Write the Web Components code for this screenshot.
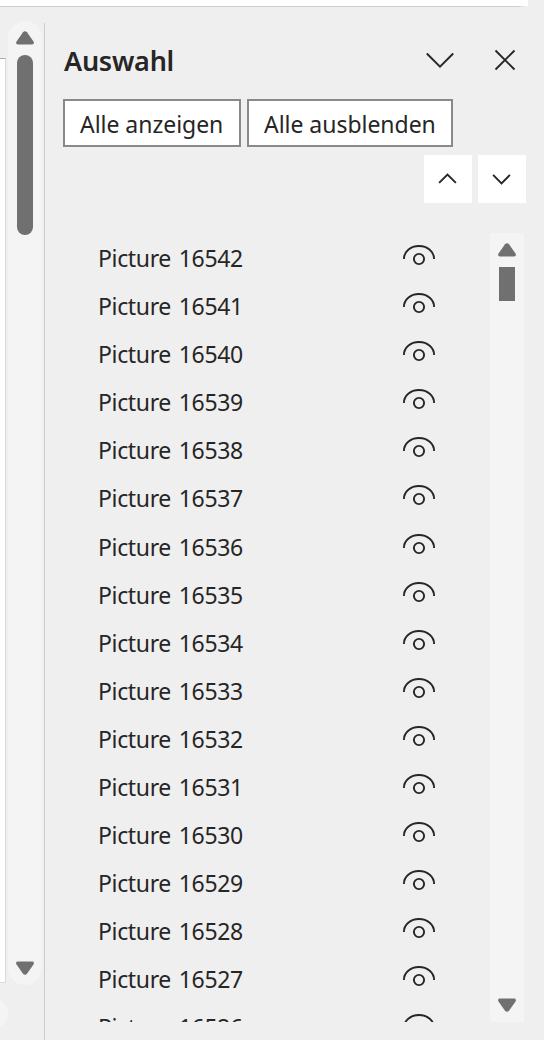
<!DOCTYPE html>
<html lang="de"><head><meta charset="utf-8"><title>Auswahl</title>
<style>html,body{margin:0;height:100%;overflow:hidden;background:#efefef}</style></head>
<body><selection-app></selection-app>
<script>
const define = (name, html, setup) => customElements.define(name, class extends HTMLElement {
  constructor() {
    super();
    this.attachShadow({mode: 'open'}).innerHTML = html;
  }
  connectedCallback() { if (setup) setup(this, this.shadowRoot); }
});

define('scroll-track', `<style>
:host{display:flex;flex-direction:column;align-items:center;width:34px;background:#f4f4f4;box-sizing:border-box;padding:10px 0}
svg{display:block;width:18px;height:14px;flex:none;fill:#707070}
.thumb{width:16px;height:var(--thumb);margin-top:10px;border-radius:var(--round,0);background:#707070}
.space{flex:1}</style>
<svg viewBox="0 0 18 14"><path d="M7 1.2Q9-.8 11 1.2L17.5 10.5Q18.8 13.5 16 13.5H2Q-.8 13.5 .5 10.5Z"/></svg>
<div class="thumb"></div><div class="space"></div>
<svg viewBox="0 0 18 14"><path d="M7 12.8Q9 14.8 11 12.8L17.5 3.5Q18.8.5 16 .5H2Q-.8.5 .5 3.5Z"/></svg>`);

define('line-icon', `<style>:host{display:block;flex:none}svg{display:block;fill:none;stroke:#262626;stroke-width:1.9;overflow:visible}</style><svg><path/></svg>`, (el, root) => {
  const icons = {
    chevron: [28, 16, 'M.8 1.5L14 14.7L27.2 1.5'],
    close: [20, 20, 'M.5 .5L19.5 19.5M19.5 .5L.5 19.5'],
    up: [18, 11, 'M.1 8.9L8.5 .5L16.9 8.9'],
    down: [18, 11, 'M.1 .9L8.5 9.3L16.9 .9'],
    eye: [32, 21, 'M.9 14C.9 6.5 7.5 1 16 1S31.1 6.5 31.1 14M21.1 14A5.1 5.1 0 1 1 10.9 14A5.1 5.1 0 1 1 21.1 14']
  };
  const [w, h, d] = icons[el.getAttribute('name')];
  const svg = root.querySelector('svg');
  svg.setAttribute('width', w); svg.setAttribute('height', h);
  root.querySelector('path').setAttribute('d', d);
});

define('text-button', `<style>
:host{display:block;box-sizing:border-box;height:48px;border:2px solid #898989;background:#fff;padding-left:15px;font:23px/47px "Noto Sans","Open Sans",sans-serif;color:#262626;white-space:nowrap;letter-spacing:-.03px}
</style><slot></slot>`);

define('icon-button', `<style>:host{display:flex;width:48px;height:48px;background:#fff;align-items:center;justify-content:center}</style><slot></slot>`);

define('picture-row', `<style>
:host{display:flex;height:48px;flex:none;box-sizing:border-box;padding-left:35px;font:23px/51px "Noto Sans","Open Sans",sans-serif;color:#262626;letter-spacing:-.35px;word-spacing:2.2px;white-space:nowrap}
span{width:305px;flex:none}line-icon{margin-top:12px}</style><span><slot></slot></span><line-icon name="eye"></line-icon>`);

define('selection-pane', `<style>
:host{display:flex;flex-direction:column;min-width:0;padding:16px 0 0 18px}
header{display:flex;height:76px;box-sizing:border-box;padding:19px 0 0 1px}
h1{margin:0;width:362px;font:600 27px/37px "Noto Sans","Open Sans",sans-serif;color:#262626;letter-spacing:-.25px}
.chev{margin-top:10px}.close{margin:8px 0 0 41px}
.actions{display:flex;gap:6px}
.order{display:flex;gap:6px;margin:8px 0 30px 361px}
.body{display:flex;height:789px}
.list{width:427px;overflow:hidden;display:flex;flex-direction:column}
.list picture-row:nth-child(7){margin-top:1px}
scroll-track{--thumb:34px}
</style>
<header><h1>Auswahl</h1><line-icon class="chev" name="chevron"></line-icon><line-icon class="close" name="close"></line-icon></header>
<div class="actions"><text-button style="width:178px">Alle anzeigen</text-button><text-button style="width:206px">Alle ausblenden</text-button></div>
<div class="order"><icon-button><line-icon name="up"></line-icon></icon-button><icon-button><line-icon name="down"></line-icon></icon-button></div>
<div class="body"><div class="list"></div><scroll-track></scroll-track></div>`, (el, root) => {
  const list = root.querySelector('.list');
  for (let n = 16542; n >= 16526; n--) {
    const row = document.createElement('picture-row');
    row.textContent = 'Picture ' + n;
    list.append(row);
  }
});

define('document-edge', `<style>
:host{display:flex;gap:2px;width:44px;height:1033px;align-items:flex-start;position:relative;overflow:hidden}
.page{width:6px;height:925px;margin-top:51px;box-sizing:border-box;background:#fff;border:solid #dadada;border-width:1px 1px 1px 0;border-top-color:#ababab}
scroll-track{margin-top:14px;height:964px;border-radius:17px;--thumb:180px;--round:8px}
.tip{position:absolute;left:-26px;top:991px;width:34px;height:31px;border-radius:16px;background:#f4f4f4}
</style><div class="page"></div><scroll-track></scroll-track><div class="tip"></div>`);

define('selection-app', `<style>
:host{display:block;width:544px;height:1040px;overflow:hidden;background:#efefef}
.ribbon{width:528px;height:7px;box-sizing:border-box;background:linear-gradient(90deg,#cecece 518px,#efefef 525px) bottom/100% 1px no-repeat,#fff}
main{display:flex;align-items:flex-start}
.rule{width:1px;height:1017px;margin-top:16px;background:#cdcdcd;flex:none}
</style><div class="ribbon"></div><main><document-edge></document-edge><div class="rule"></div><selection-pane style="width:481px"></selection-pane></main>`);
</script></body></html>
